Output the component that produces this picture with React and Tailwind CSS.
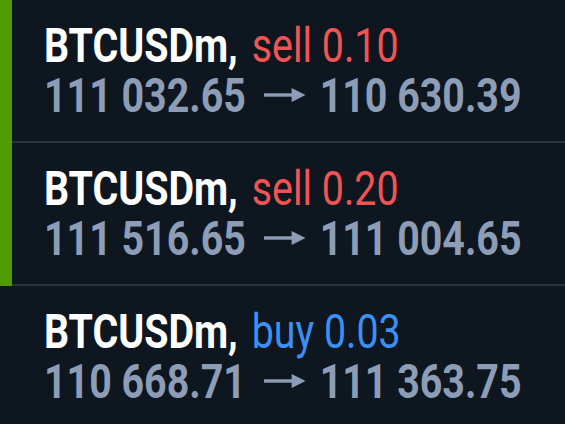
import React from 'react';

const trades = [
  { symbol: 'BTCUSDm', side: 'sell', volume: '0.10', open: '111 032.65', close: '110 630.39', active: true },
  { symbol: 'BTCUSDm', side: 'sell', volume: '0.20', open: '111 516.65', close: '111 004.65', active: true },
  { symbol: 'BTCUSDm', side: 'buy', volume: '0.03', open: '110 668.71', close: '111 363.75', active: false },
];

// long thin arrow with a solid head; width is pre-stretched because the line is scaled by 0.82
function Arrow() {
  return (
    <svg
      width="51"
      height="14"
      viewBox="0 0 42 14"
      preserveAspectRatio="none"
      className="ml-[22px] mr-[17px] inline-block align-[10px]"
      fill="currentColor"
    >
      <rect x="0" y="5.3" width="30" height="3.4" />
      <polygon points="28,0 42,7 28,14" />
    </svg>
  );
}

function TradeRow({ trade, last }) {
  const sideColor = trade.side === 'sell' ? 'text-[#f25454]' : 'text-[#3d8ff2]';
  return (
    <div className="flex">
      <div className={trade.active ? 'w-[12px] shrink-0 bg-[#4f9b00]' : 'w-[12px] shrink-0'} />
      <div className={last ? 'flex-1' : 'flex-1 border-b-2 border-[#2a333e]'}>
        <div className="h-[141px] pl-[32px] pt-[21px] text-[48px] leading-[50px] whitespace-nowrap">
          <div className="origin-left scale-x-[0.82]">
            <span className="font-bold text-white">{trade.symbol},</span>
            <span className={`ml-[17px] ${sideColor}`}>
              {trade.side} {trade.volume}
            </span>
          </div>
          <div className="origin-left scale-x-[0.82] font-bold text-[#8d9db6]">
            {trade.open}
            <Arrow />
            {trade.close}
          </div>
        </div>
      </div>
    </div>
  );
}

export default function App() {
  return (
    <div className="min-h-screen w-[565px] h-[424px] overflow-hidden bg-[#0e1620] font-['Roboto',sans-serif]">
      {trades.map((t, i) => (
        <TradeRow key={i} trade={t} last={i === trades.length - 1} />
      ))}
    </div>
  );
}
